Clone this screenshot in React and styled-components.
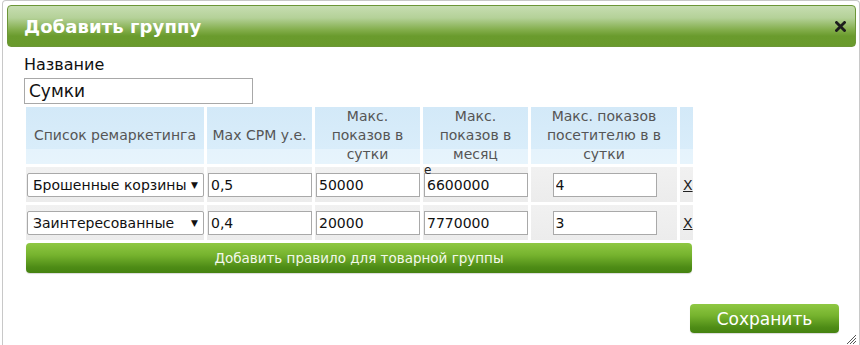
import React from 'react';
import styled, { createGlobalStyle } from 'styled-components';

const GlobalStyle = createGlobalStyle`
  html, body {
    margin: 0;
    padding: 0;
    background: #fff;
  }
  body {
    font-family: "DejaVu Sans", Verdana, sans-serif;
  }
`;

const rows = [
  { list: 'Брошенные корзины', cpm: '0,5', day: '50000', month: '6600000', visitor: '4', note: 'e' },
  { list: 'Заинтересованные', cpm: '0,4', day: '20000', month: '7770000', visitor: '3' },
];

const Dialog = styled.div`
  position: relative;
  box-sizing: border-box;
  width: 858px;
  height: 345px;
  margin-left: 2px;
  border: 1px solid #c8c8c8;
  border-bottom: none;
  border-radius: 4px 4px 0 0;
  padding: 4px 3px 0 4px;
`;

const TitleBar = styled.div`
  display: flex;
  align-items: center;
  justify-content: space-between;
  height: 40px;
  padding: 0 9px 0 16px;
  border: 1px solid #6c9637;
  border-radius: 4px;
  background: linear-gradient(#c6ddb1 0%, #b4d198 30%, #82ad4a 60%, #6a9b2d 75%, #699a2c 100%);
`;

const Title = styled.h1`
  margin: 0;
  font-size: 18px;
  font-weight: bold;
  color: #fff;
  letter-spacing: 0.1px;
`;

const Close = styled.button`
  border: none;
  background: none;
  padding: 0;
  display: flex;
  cursor: pointer;
`;

const Content = styled.div`
  padding: 8px 0 0 17px;
`;

const Label = styled.label`
  display: block;
  font-size: 16px;
  color: #111;
  line-height: 20px;
  margin-bottom: 3px;
`;

const NameInput = styled.input`
  box-sizing: border-box;
  width: 229px;
  height: 26px;
  border: 1px solid #a8a8a8;
  padding: 0 4px;
  font-family: inherit;
  font-size: 17px;
  color: #111;
  outline: none;
`;

const Table = styled.table`
  border-collapse: separate;
  border-spacing: 3px;
  margin: 0 0 0 -1px;
  table-layout: fixed;
`;

const Th = styled.th`
  width: ${p => p.w}px;
  height: 55px;
  padding: 0;
  font-size: 14px;
  font-weight: normal;
  line-height: 19px;
  color: #555;
  text-align: center;
  background: linear-gradient(#d3e9f8 0%, #d9edfa 74%, #e5f3fc 74%, #e7f4fc 100%);
`;

const Td = styled.td`
  height: 35px;
  padding: 0 0 0 ${p => p.pad || 1}px;
  text-align: ${p => p.align || 'left'};
  background: linear-gradient(#f1f1f1, #ececec);
  position: relative;
  vertical-align: middle;
`;

const Field = styled.input`
  box-sizing: border-box;
  width: 104px;
  height: 24px;
  border: 1px solid #a9a9a9;
  padding: 0 2px;
  font-family: inherit;
  font-size: 14px;
  color: #111;
  background: #fff;
  outline: none;
`;

const SelectBox = styled.div`
  box-sizing: border-box;
  display: flex;
  align-items: center;
  justify-content: space-between;
  width: 177px;
  height: 24px;
  border: 1px solid #a9a9a9;
  border-radius: 2px;
  padding: 0 5px 0 5px;
  background: #fff;
  font-size: 14px;
  color: #111;
`;

const Arrow = styled.span`
  font-size: 9px;
  color: #111;
`;

const Note = styled.span`
  position: absolute;
  left: 1px;
  top: -4px;
  font-size: 12px;
  color: #222;
`;

const RemoveLink = styled.a`
  font-size: 14px;
  color: #222;
  text-decoration: underline;
  padding-left: 2px;
`;

const GreenButton = styled.button`
  box-sizing: border-box;
  display: block;
  border: none;
  border-radius: 4px;
  cursor: pointer;
  font-family: inherit;
  color: #f2f8ea;
  background: linear-gradient(#8fc843 0%, #76b32e 40%, #4e8c16 80%, #458210 100%);
  box-shadow: 0 1px 1px rgba(0, 0, 0, 0.15);
`;

const AddRule = styled(GreenButton)`
  width: 666px;
  height: 30px;
  margin-left: 2px;
  font-size: 13.5px;
`;

const Footer = styled.div`
  display: flex;
  justify-content: flex-end;
  padding: 31px 17px 0 0;
`;

const Save = styled(GreenButton)`
  width: 149px;
  height: 29px;
  font-size: 17px;
  color: #fff;
`;

const Grip = styled.svg`
  position: absolute;
  right: 2px;
  bottom: 0;
`;

export default function App() {
  return (
    <>
      <GlobalStyle />
      <Dialog>
        <TitleBar>
          <Title>Добавить группу</Title>
          <Close aria-label="Закрыть">
            <svg width="11" height="11" viewBox="0 0 11 11">
              <path d="M1.5 1.5 L9.5 9.5 M9.5 1.5 L1.5 9.5" stroke="#1d1d1d" strokeWidth="2.8" strokeLinecap="square" />
            </svg>
          </Close>
        </TitleBar>
        <Content>
          <Label>Название</Label>
          <NameInput defaultValue="Сумки" />
          <Table>
            <thead>
              <tr>
                <Th w={178}>Список ремаркетинга</Th>
                <Th w={105}>Max CPM у.е.</Th>
                <Th w={105}>Макс.<br />показов в<br />сутки</Th>
                <Th w={105}>Макс.<br />показов в<br />месяц</Th>
                <Th w={146}>Макс. показов<br />посетителю в в<br />сутки</Th>
                <Th w={12}></Th>
              </tr>
            </thead>
            <tbody>
              {rows.map(r => (
                <tr key={r.list}>
                  <Td pad={0}>
                    <SelectBox>
                      {r.list}
                      <Arrow>▼</Arrow>
                    </SelectBox>
                  </Td>
                  <Td><Field defaultValue={r.cpm} /></Td>
                  <Td><Field defaultValue={r.day} /></Td>
                  <Td>
                    {r.note && <Note>{r.note}</Note>}
                    <Field defaultValue={r.month} />
                  </Td>
                  <Td align="center" pad={0}><Field defaultValue={r.visitor} /></Td>
                  <Td pad={0}><RemoveLink>X</RemoveLink></Td>
                </tr>
              ))}
            </tbody>
          </Table>
          <AddRule>Добавить правило для товарной группы</AddRule>
        </Content>
        <Footer>
          <Save>Сохранить</Save>
        </Footer>
        <Grip width="12" height="12" viewBox="0 0 12 12">
          <path d="M11 2 L2 11 M11 5 L5 11 M11 8 L8 11" stroke="#555" strokeWidth="1" />
        </Grip>
      </Dialog>
    </>
  );
}
